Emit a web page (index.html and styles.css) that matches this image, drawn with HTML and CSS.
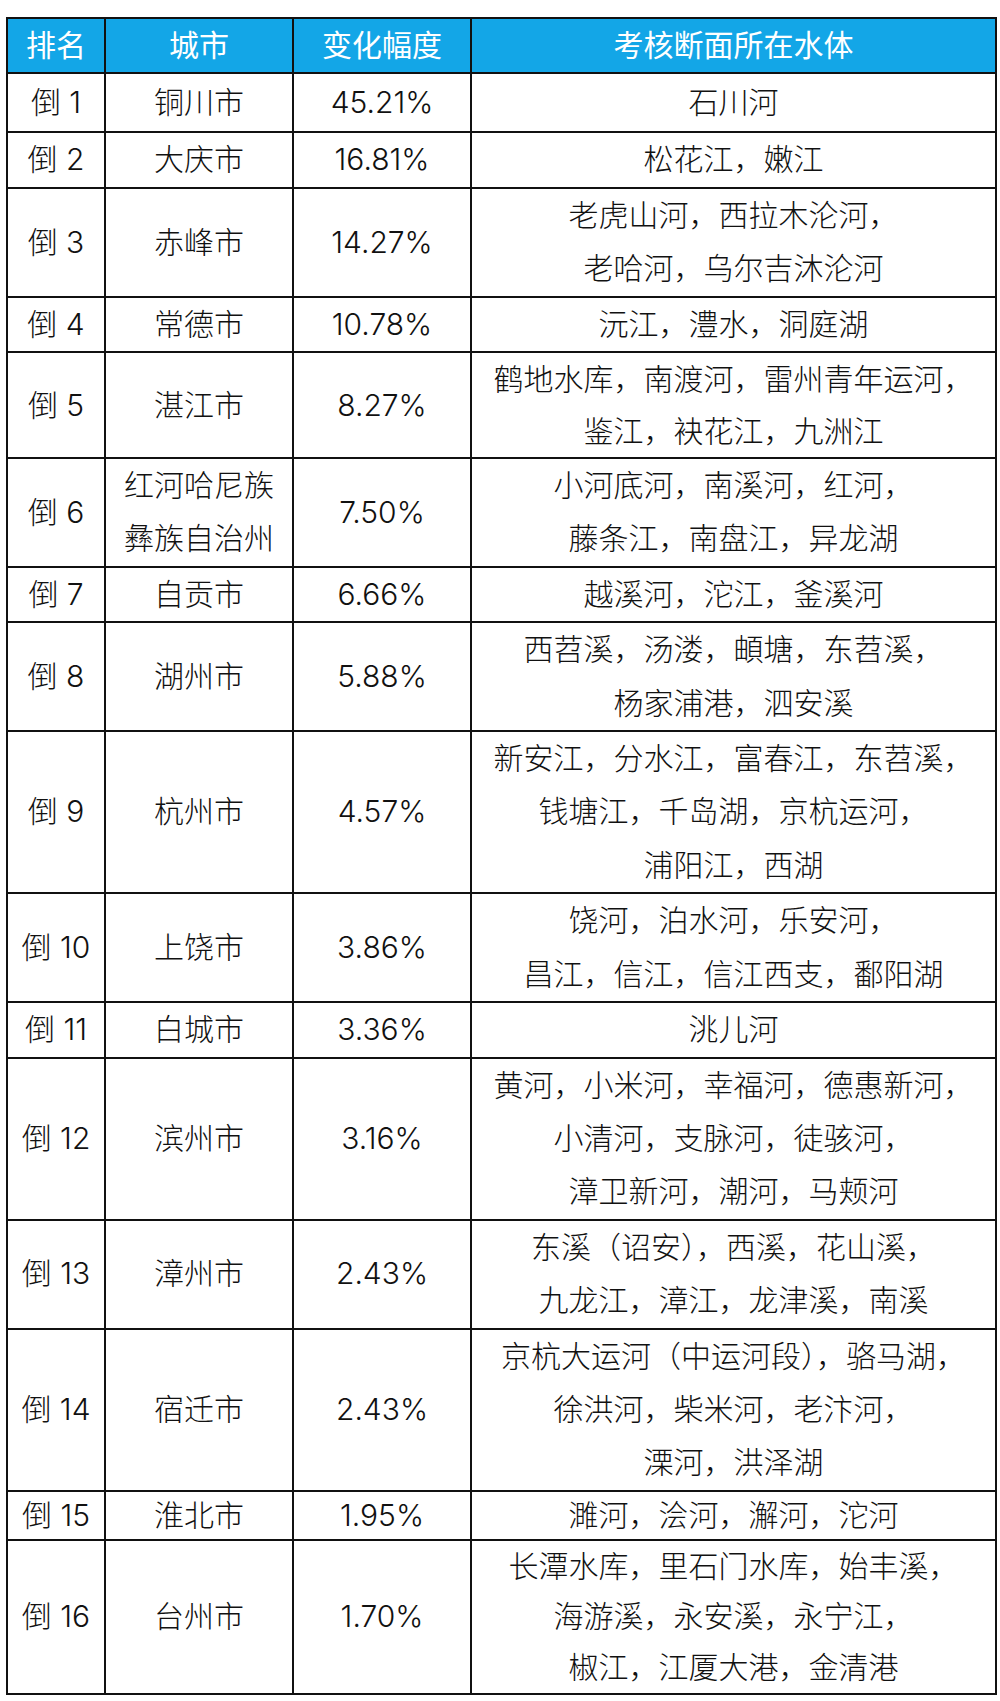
FILE: index.html
```html
<!DOCTYPE html>
<html lang="zh-CN">
<head>
<meta charset="utf-8">
<title>考核断面所在水体</title>
<link rel="stylesheet" href="styles.css">
</head>
<body>
<table class="rank">
  <colgroup>
    <col class="c-rank">
    <col class="c-city">
    <col class="c-change">
    <col class="c-water">
  </colgroup>
  <thead>
    <tr class="head">
      <th>排名</th><th>城市</th><th>变化幅度</th><th>考核断面所在水体</th>
    </tr>
  </thead>
  <tbody>
    <tr class="r-first"><td>倒 1</td><td>铜川市</td><td>45.21%</td><td>石川河</td></tr>
    <tr><td>倒 2</td><td>大庆市</td><td>16.81%</td><td>松花江，嫩江</td></tr>
    <tr><td>倒 3</td><td>赤峰市</td><td>14.27%</td><td>老虎山河，西拉木沦河，<br>老哈河，乌尔吉沐沦河</td></tr>
    <tr><td>倒 4</td><td>常德市</td><td>10.78%</td><td>沅江，澧水，洞庭湖</td></tr>
    <tr class="r-tight"><td>倒 5</td><td>湛江市</td><td>8.27%</td><td>鹤地水库，南渡河，雷州青年运河，<br>鉴江，袂花江，九洲江</td></tr>
    <tr><td>倒 6</td><td>红河哈尼族<br>彝族自治州</td><td>7.50%</td><td>小河底河，南溪河，红河，<br>藤条江，南盘江，异龙湖</td></tr>
    <tr><td>倒 7</td><td>自贡市</td><td>6.66%</td><td>越溪河，沱江，釜溪河</td></tr>
    <tr><td>倒 8</td><td>湖州市</td><td>5.88%</td><td>西苕溪，汤溇，頔塘，东苕溪，<br>杨家浦港，泗安溪</td></tr>
    <tr><td>倒 9</td><td>杭州市</td><td>4.57%</td><td>新安江，分水江，富春江，东苕溪，<br>钱塘江，千岛湖，京杭运河，<br>浦阳江，西湖</td></tr>
    <tr><td>倒 10</td><td>上饶市</td><td>3.86%</td><td>饶河，泊水河，乐安河，<br>昌江，信江，信江西支，鄱阳湖</td></tr>
    <tr><td>倒 11</td><td>白城市</td><td>3.36%</td><td>洮儿河</td></tr>
    <tr><td>倒 12</td><td>滨州市</td><td>3.16%</td><td>黄河，小米河，幸福河，德惠新河，<br>小清河，支脉河，徒骇河，<br>漳卫新河，潮河，马颊河</td></tr>
    <tr><td>倒 13</td><td>漳州市</td><td>2.43%</td><td>东溪（诏安），西溪，花山溪，<br>九龙江，漳江，龙津溪，南溪</td></tr>
    <tr><td>倒 14</td><td>宿迁市</td><td>2.43%</td><td>京杭大运河（中运河段），骆马湖，<br>徐洪河，柴米河，老汴河，<br>溧河，洪泽湖</td></tr>
    <tr class="r-short"><td>倒 15</td><td>淮北市</td><td>1.95%</td><td>濉河，浍河，澥河，沱河</td></tr>
    <tr class="r-last"><td>倒 16</td><td>台州市</td><td>1.70%</td><td>长潭水库，里石门水库，始丰溪，<br>海游溪，永安溪，永宁江，<br>椒江，江厦大港，金清港</td></tr>
  </tbody>
</table>
</body>
</html>
```
FILE: styles.css
```css
html, body {
  margin: 0;
  padding: 0;
  background: #ffffff;
}

body {
  font-family: "Inter", "Noto Sans CJK SC", sans-serif;
  color: #111111;
}

.rank {
  margin: 17px 0 0 6px;
  width: 989px;
  table-layout: fixed;
  border-collapse: collapse;
  border: 2px solid #111111;
}

.c-rank { width: 98px; }
.c-city { width: 188px; }
.c-change { width: 178px; }
.c-water { width: 525px; }

.rank th,
.rank td {
  border: 2px solid #111111;
  padding: 0;
  text-align: center;
  vertical-align: middle;
  font-size: 30px;
  font-weight: 300;
  line-height: 53.4px;
  white-space: nowrap;
}

.rank th {
  background: #13a6e7;
  color: #ffffff;
  font-weight: 400;
}

.rank .r-first td { line-height: 57px; }
.rank .r-tight td { line-height: 52px; }
.rank .r-short td { line-height: 47px; }
.rank .r-last td { line-height: 50.7px; }
```
